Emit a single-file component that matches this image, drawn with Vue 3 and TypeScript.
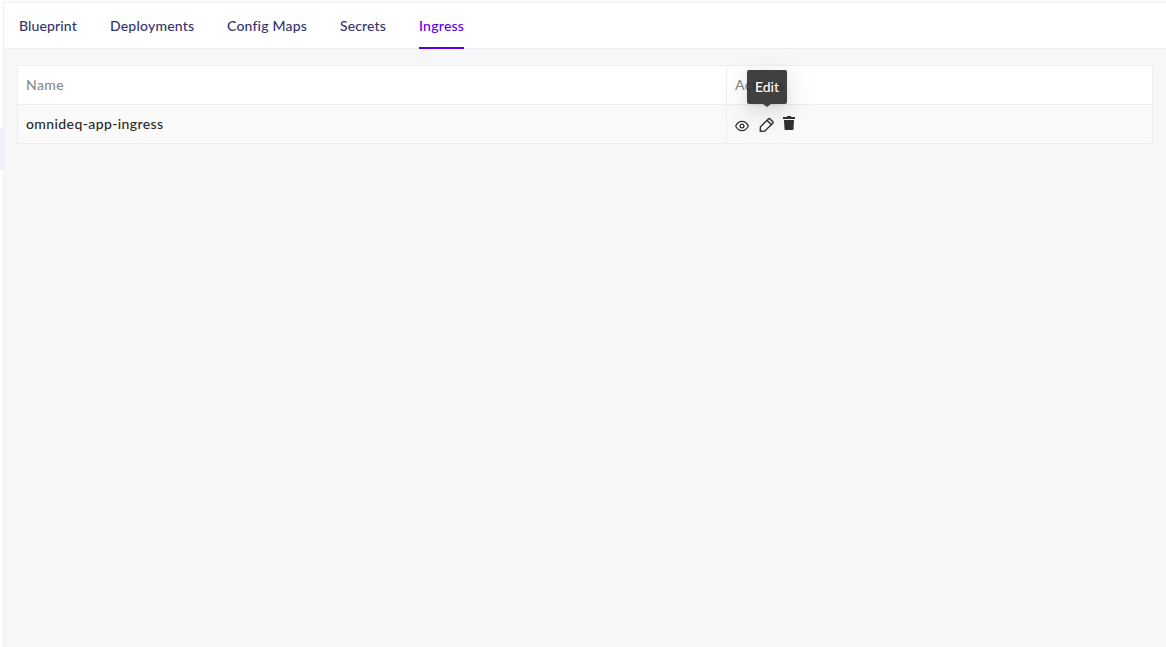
<script setup lang="ts">
import { ref } from 'vue'

interface Tab {
  id: string
  label: string
}

const tabs: Tab[] = [
  { id: 'blueprint', label: 'Blueprint' },
  { id: 'deployments', label: 'Deployments' },
  { id: 'config-maps', label: 'Config Maps' },
  { id: 'secrets', label: 'Secrets' },
  { id: 'ingress', label: 'Ingress' },
]
const active = ref('ingress')
const rows = ref([{ name: 'omnideq-app-ingress' }])
</script>

<template>
  <div class="shell">
    <aside class="rail"><div class="rail-item"></div></aside>
    <main class="panel">
      <nav class="tabs">
        <button
          v-for="tab in tabs"
          :key="tab.id"
          type="button"
          class="tab"
          :class="[tab.id, { active: tab.id === active }]"
          @click="active = tab.id"
        >{{ tab.label }}</button>
      </nav>
      <section class="table">
        <div class="row head">
          <div class="cell name">Name</div>
          <div class="cell actions">Actions</div>
        </div>
        <div v-for="row in rows" :key="row.name" class="row">
          <div class="cell name value">{{ row.name }}</div>
          <div class="cell actions">
            <svg class="icon eye" viewBox="0 0 14 12" fill="none" stroke="currentColor" stroke-width="1.25">
              <path d="M.65 6C2.1 3 4.3 1.3 7 1.3S11.9 3 13.35 6C11.9 9 9.7 10.7 7 10.7S2.1 9 .65 6Z" stroke-linejoin="round" />
              <circle cx="7" cy="6" r="1.9" />
            </svg>
            <span class="edit">
              <svg class="icon pencil" viewBox="0 0 16 16" fill="none" stroke="currentColor" stroke-width="1.4" stroke-linejoin="round" stroke-linecap="round">
                <path d="M1.2 14.3 1.4 9.9 9.4 1.9Q10.2 1.1 11 1.9L13.8 4.7Q14.6 5.5 13.8 6.3L5.8 14.1Z" />
                <path d="m8.2 3.4 4.1 4.1" />
              </svg>
              <span class="tooltip">Edit</span>
            </span>
            <svg class="icon trash" viewBox="0 0 12 14" fill="currentColor">
              <path d="M4 0h4v1h4v2H0V1h4ZM1 4h10l-.5 9q-.1 1-1 1h-7q-.9 0-1-1Z" />
            </svg>
          </div>
        </div>
      </section>
    </main>
  </div>
</template>

<style>
body {
  margin: 0;
  background: #fff;
}
</style>

<style scoped>
.shell {
  display: flex;
  height: 647px;
  overflow: hidden;
  font: 500 14px/20px Lato, "Noto Sans", sans-serif;
  box-sizing: border-box;
  padding-top: 1px;
}
.rail {
  width: 3px;
  flex: none;
  padding-top: 127px;
}
.rail-item {
  height: 42px;
  background: #f0f0fa;
}
.panel {
  flex: 1;
  background: #f6f7f9;
  border-left: 1px solid #efefef;
  border-top: 2px solid #f5f5f6;
  border-top-left-radius: 2px;
}
.tabs {
  display: flex;
  gap: 33px;
  height: 46px;
  padding-left: 15px;
  box-sizing: border-box;
  background: #fff;
  border-bottom: 1px solid #eeeff0;
}
.tab {
  height: 46px;
  box-sizing: border-box;
  flex: none;
  padding: 2px 0 0;
  border: 0;
  border-bottom: 2px solid transparent;
  background: none;
  color: #34346e;
  font: inherit;
  letter-spacing: .2px;
  text-align: left;
  white-space: nowrap;
}
.blueprint { width: 58px; letter-spacing: .12px; }
.deployments { width: 84px; }
.config-maps { width: 80px; }
.secrets { width: 46px; letter-spacing: .12px; }
.ingress { width: 45px; letter-spacing: .25px; }
.tab.active {
  color: #5a00e6;
  border-bottom-color: #5a00e6;
}
.table {
  margin: 16px 13px 0;
  border: 1px solid #eee;
  border-radius: 2px;
}
.row {
  display: flex;
  height: 38px;
  background: #fafafa;
}
.head {
  background: #fff;
  border-bottom: 1px solid #eee;
  color: #8b8b8b;
  letter-spacing: .4px;
}
.cell {
  display: flex;
  align-items: center;
  box-sizing: border-box;
  padding-left: 8px;
}
.name {
  width: 709px;
  border-right: 1px solid #eee;
}
.value {
  color: #2c2929;
  letter-spacing: .39px;
}
.icon {
  display: block;
  color: #303030;
}
.eye {
  width: 14px;
  height: 12px;
  margin-top: 3px;
}
.edit {
  position: relative;
  margin-left: 10px;
}
.pencil {
  width: 16px;
  height: 16px;
  margin-top: 2px;
}
.trash {
  width: 12px;
  height: 14px;
  margin-left: 8px;
  margin-bottom: 2px;
}
.tooltip {
  position: absolute;
  left: -12px;
  bottom: 29px;
  width: 40px;
  height: 34px;
  border-radius: 2px;
  background: rgba(38, 38, 38, .88);
  box-shadow: 0 3px 6px -4px rgba(0, 0, 0, .12), 0 6px 16px rgba(0, 0, 0, .08), 0 9px 28px 8px rgba(0, 0, 0, .05);
  color: #fff;
  line-height: 34px;
  text-align: center;
}
.tooltip::after {
  content: "";
  position: absolute;
  top: 34px;
  left: 16px;
  border: 4px solid transparent;
  border-top: 3px solid #414141;
  border-bottom: 0;
}
</style>
